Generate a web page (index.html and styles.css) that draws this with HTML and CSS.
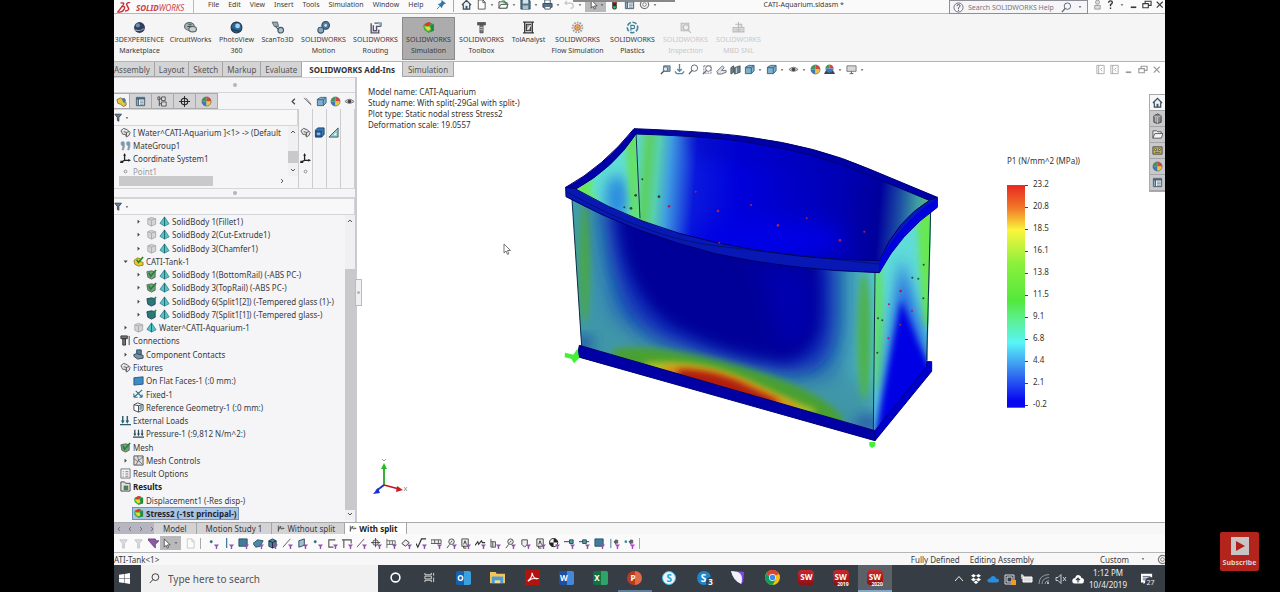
FILE: index.html
```html
<!DOCTYPE html>
<html lang="en">
<head>
<meta charset="utf-8">
<title>CATI-Aquarium.sldasm</title>
<link rel="stylesheet" href="styles.css">
</head>
<body>
<svg class="sprite" aria-hidden="true">
  <symbol id="sphere" viewBox="0 0 12 12"><circle cx="6" cy="6" r="5" fill="#2c3e5c"/><circle cx="4.5" cy="4" r="2" fill="#6f8cae"/><path d="M2 8q4 2 8-1" stroke="#9ab" fill="none"/></symbol>
  <symbol id="circuit" viewBox="0 0 12 12"><ellipse cx="5" cy="5" rx="4.5" ry="3.5" fill="#a9b1b5" stroke="#566"/><ellipse cx="8" cy="7.500" rx="3.500" ry="2.500" fill="#c9d0d2" stroke="#566"/><path d="M3 5h4M4 3.500h3" stroke="#455"/></symbol>
  <symbol id="photo" viewBox="0 0 12 12"><circle cx="6" cy="6" r="5" fill="#27689b" stroke="#234"/><circle cx="7" cy="4.500" r="2.200" fill="#a7d4ef"/><path d="M2 7q3 3 7 2" stroke="#134" fill="none"/></symbol>
  <symbol id="scan" viewBox="0 0 12 12"><path d="M1 1h5l1 4H3z" fill="#9aa7b0" stroke="#455" stroke-width=".7"/><circle cx="9" cy="8.500" r="2.600" fill="#a7c4d4" stroke="#456"/><path d="M4 5l3 3" stroke="#456"/></symbol>
  <symbol id="motion" viewBox="0 0 12 12"><circle cx="8" cy="4" r="3.500" fill="#4f7fa6" stroke="#345"/><circle cx="8" cy="4" r="1.200" fill="#dde"/><circle cx="3.500" cy="8.500" r="2.700" fill="#86a9c4" stroke="#456"/></symbol>
  <symbol id="route" viewBox="0 0 12 12"><path d="M2 2v9h7V8M4 4v5h3V5h4M5 2h6v3" fill="none" stroke="#556" stroke-width="1.300"/><path d="M7 1h4v4" fill="#9ab"/></symbol>
  <symbol id="sim" viewBox="0 0 12 12"><path d="M1 4l5-3 5 2v6l-5 2-4-3z" fill="#2fae4a"/><path d="M2 3l4-2 3 1-4 3z" fill="#e3342b"/><path d="M2 5l5 0 2 3-4 1z" fill="#f7d32c"/><path d="M8 4l3-1v6l-3 1z" fill="#1d8b4a"/></symbol>
  <symbol id="bolt" viewBox="0 0 12 12"><path d="M2 1h8v3H2z" fill="#555"/><path d="M4.500 4h3v7h-3z" fill="#777" stroke="#444" stroke-width=".6"/><path d="M4.500 6h3M4.500 8h3" stroke="#ddd" stroke-width=".6"/></symbol>
  <symbol id="tol" viewBox="0 0 12 12"><path d="M1 1h10M1 11h10M2.500 1v10M9.500 1v10" stroke="#333" stroke-width="1.200"/><path d="M4 3h4v6H4z" fill="#8fa5b5" stroke="#333"/><path d="M5 8l3-4" stroke="#fff"/></symbol>
  <symbol id="flow" viewBox="0 0 12 12"><circle cx="6" cy="6" r="4.500" fill="none" stroke="#8aa" stroke-width="1.800" stroke-dasharray="1.500 1"/><circle cx="6" cy="6" r="2.500" fill="#f3c46a" stroke="#e8604a"/><circle cx="6" cy="6" r="1" fill="#3a9"/></symbol>
  <symbol id="plast" viewBox="0 0 12 12"><circle cx="6" cy="6" r="4.800" fill="none" stroke="#47839b" stroke-width="1.500" stroke-dasharray="4 1.500"/><path d="M4.500 9V4h2q1.500 0 1.500 1.500T6.500 7h-2" fill="none" stroke="#3a7d92"/></symbol>
  <symbol id="insp" viewBox="0 0 12 12"><path d="M2 2h7v7H2z" fill="#ddd" stroke="#bbb"/><circle cx="6.500" cy="6" r="2.500" fill="#eee" stroke="#bbb"/><path d="M8 8l3 3" stroke="#bbb"/></symbol>
  <symbol id="mbd" viewBox="0 0 12 12"><path d="M1 6h10v4H1zM3 3h6v3M6 1v9M3 8h6" fill="#ddd" stroke="#bbb"/></symbol>
  <symbol id="home" viewBox="0 0 12 12"><path d="M1 6.500L6 1.500l5 5M2.500 6v5h7V6" fill="#e6eef4" stroke="#3b4a56" stroke-width="1.300"/><path d="M5 11V7.500h2V11" fill="#3b5468"/></symbol>
  <symbol id="page" viewBox="0 0 12 12"><path d="M2.500 1h5l2.500 2.500V11H2.500z" fill="#fff" stroke="#555"/><path d="M7.500 1v3H10" fill="none" stroke="#555"/></symbol>
  <symbol id="open" viewBox="0 0 12 12"><path d="M1 10V3h4l1 1h4v6z" fill="#e9eef0" stroke="#555"/><path d="M1 10l2-4h8l-2 4z" fill="#fff" stroke="#555"/><path d="M4 2q4-2 5 3l1.500-1L9 7 6.500 5.500 8 5Q7 2 4 3z" fill="#2d9a47"/></symbol>
  <symbol id="save" viewBox="0 0 12 12"><path d="M1 1h9l1 1v9H1z" fill="#4f768c" stroke="#2d4657"/><path d="M3 1h6v4H3z" fill="#d7e3e9"/><path d="M3 7h6v4H3z" fill="#aebfc8"/></symbol>
  <symbol id="print" viewBox="0 0 12 12"><path d="M3 1h6v4H3z" fill="#fff" stroke="#456"/><path d="M1 5h10v4H1z" fill="#557a90" stroke="#345"/><path d="M3 8h6v3H3z" fill="#fff" stroke="#456"/></symbol>
  <symbol id="undo" viewBox="0 0 12 12"><path d="M3 2L1 4.500 3.500 6M1 4.500h6q3 0 3 3T7 10" fill="none" stroke="#c3c5ca" stroke-width="1.400"/></symbol>
  <symbol id="arrow" viewBox="0 0 12 12"><path d="M3.500 1v9l2-2 1.500 3 1.300-.7L7 7.500h3z" fill="#fff" stroke="#444" stroke-width=".9"/></symbol>
  <symbol id="light" viewBox="0 0 12 12"><rect x="3.500" y=".5" width="5" height="11" rx="2" fill="#333"/><circle cx="6" cy="3" r="1.500" fill="#e33"/><circle cx="6" cy="9" r="1.500" fill="#3b4"/></symbol>
  <symbol id="list" viewBox="0 0 12 12"><path d="M1.500 1.500h9v9h-9z" fill="#e8eef2" stroke="#456"/><path d="M1.500 3h9" stroke="#345f7c" stroke-width="1.500"/><path d="M3.500 3v7" stroke="#345f7c" stroke-width="1.500"/><path d="M5.500 5.500h4M5.500 7.300h4M5.500 9h4" stroke="#678" stroke-width=".8"/></symbol>
  <symbol id="gear" viewBox="0 0 12 12"><circle cx="6" cy="6" r="4.500" fill="none" stroke="#777" stroke-width="1.300"/><circle cx="6" cy="6" r="2" fill="none" stroke="#777"/></symbol>
  <symbol id="caret" viewBox="0 0 12 12"><path d="M4 5h4L6 7.500z" fill="#555"/></symbol>
  <symbol id="pin" viewBox="0 0 12 12"><path d="M6 1l5 4-2 .5L7 8l-.5 2L2 5.500 4.500 5 6 3z" fill="#2c77ad"/><path d="M4 8l-3 3" stroke="#2c77ad"/></symbol>
  <symbol id="mag" viewBox="0 0 12 12"><circle cx="7" cy="4.500" r="3.500" fill="none" stroke="#54616f"/><path d="M4.500 7L1 11" stroke="#54616f" stroke-width="1.400"/></symbol>
  <symbol id="help" viewBox="0 0 12 12"><circle cx="6" cy="6" r="5" fill="#f4f5f7" stroke="#667"/><path d="M4.300 4.500q0-1.800 1.700-1.800t1.700 1.500Q7.700 5.500 6 6.200V7.500M6 8.500v1.200" fill="none" stroke="#445"/></symbol>
  <symbol id="user" viewBox="0 0 12 12"><circle cx="6" cy="3.500" r="2.200" fill="#ddd" stroke="#999"/><path d="M3 11V7h6v4z" fill="#ddd" stroke="#999"/></symbol>
  <symbol id="quest" viewBox="0 0 12 12"><path d="M4 4q0-2 2-2t2 1.800Q8 5 6 6.200V8M6 9.200V11" fill="none" stroke="#333" stroke-width="1.500"/></symbol>
  <symbol id="min" viewBox="0 0 12 12"><path d="M3 9h6" stroke="currentColor" stroke-width="1.800"/></symbol>
  <symbol id="rest" viewBox="0 0 12 12"><path d="M2 5h6v4.500H2zM4.500 5V2.500H11V7H8" fill="none" stroke="currentColor" stroke-width="1.200"/></symbol>
  <symbol id="close" viewBox="0 0 12 12"><path d="M3 3l6.500 6.500M9.500 3L3 9.500" stroke="currentColor" stroke-width="1.200"/></symbol>
  <symbol id="zfit" viewBox="0 0 12 12"><path d="M4 2h7v6H4z" fill="#8fb0c4" stroke="#567"/><circle cx="6" cy="5.500" r="2.500" fill="#dfe9ef" stroke="#567"/><path d="M4 8l-3 3" stroke="#456" stroke-width="1.500"/></symbol>
  <symbol id="norm" viewBox="0 0 12 12"><path d="M6 0v8M3.500 5.500L6 8l2.500-2.500M1 8l2 2.500h6L11 8" fill="none" stroke="#5f87a3" stroke-width="1.500"/></symbol>
  <symbol id="zarea" viewBox="0 0 12 12"><path d="M2 2h8v8H2z" fill="none" stroke="#778" stroke-dasharray="2 1"/><circle cx="7" cy="5" r="3" fill="#fff" stroke="#667"/><path d="M5 7l-4 4" stroke="#667" stroke-width="1.400"/></symbol>
  <symbol id="prev" viewBox="0 0 12 12"><path d="M1 8l6-6 2 2-3 3h5v2l-5 2H2z" fill="#dfe6ea" stroke="#667"/></symbol>
  <symbol id="sect" viewBox="0 0 12 12"><path d="M1 4l3-2v7l-3 2zM5 4l6-2v7l-6 2z" fill="#6b8092" stroke="#455"/><path d="M7 4v6" stroke="#cde"/></symbol>
  <symbol id="cube" viewBox="0 0 12 12"><path d="M1.500 3.500L5 1.500h6v6l-3 3H1.500z" fill="#7fb0cd" stroke="#3d6178"/><path d="M1.500 4H8v6.500M8 4l3-2.500" fill="none" stroke="#3d6178"/></symbol>
  <symbol id="dcube" viewBox="0 0 12 12"><path d="M1.500 3.500L4 1h7v7l-2.500 3h-7z" fill="#3379b4" stroke="#1d3f66"/><path d="M1.500 4H8.500v7H1.500z" fill="#1f4c85"/><path d="M3 6h4v3H3z" fill="#8ab4dc"/></symbol>
  <symbol id="eye" viewBox="0 0 12 12"><path d="M1 6q5-5 10 0-5 4-10 0z" fill="#ccc" stroke="#777"/><circle cx="6" cy="6" r="2" fill="#444"/></symbol>
  <symbol id="ball" viewBox="0 0 12 12"><path d="M6 6V1a5 5 0 0 0-5 5z" fill="#3b9b55"/><path d="M6 6V1a5 5 0 0 1 5 5z" fill="#d9453c"/><path d="M6 6v5a5 5 0 0 1-5-5z" fill="#3c78c0"/><path d="M6 6v5a5 5 0 0 0 5-5z" fill="#e8c840"/><circle cx="6" cy="6" r="5" fill="none" stroke="#555" stroke-width=".6"/></symbol>
  <symbol id="scene" viewBox="0 0 12 12"><path d="M0 11l2-4h8l2 4z" fill="#444"/><path d="M6 5V.5a4.500 4.500 0 0 0-4.500 4.500z" fill="#3b9b55"/><path d="M6 5V.5a4.500 4.500 0 0 1 4.500 4.500z" fill="#d9453c"/><path d="M1.500 5h9Q10 9 6 9.500 2 9 1.500 5z" fill="#3c78c0"/></symbol>
  <symbol id="mon" viewBox="0 0 12 12"><path d="M1 2h10v6H1z" fill="#d6d9db" stroke="#777"/><path d="M6 8v2M4 10.500h4" stroke="#555"/></symbol>
  <symbol id="panel" viewBox="0 0 12 12"><path d="M2 1.500h8v9H2zM4 1.500v9M8 4L6 6l2 2" fill="none" stroke="#aaa"/></symbol>
  <symbol id="asm" viewBox="0 0 12 12"><path d="M1 4l4-2 3 2v2l3 1v3l-3 1.500L5 9 2 8z" fill="#e8c63c" stroke="#6b5c20" stroke-width=".8"/><path d="M6 3l3-1 2 3-2 3z" fill="#4d7a9c"/></symbol>
  <symbol id="conf" viewBox="0 0 12 12"><path d="M2.500 1v10M2.500 3h3M2.500 8.500h3" fill="none" stroke="#444"/><path d="M5 1h4v4H5zM5 6.500h5V11H5zM1 1h2v3H1z" fill="#ddd" stroke="#444" stroke-width=".9"/></symbol>
  <symbol id="target" viewBox="0 0 12 12"><circle cx="6" cy="6" r="3.500" fill="none" stroke="#222" stroke-width="1.200"/><path d="M6 0v12M0 6h12" stroke="#222"/></symbol>
  <symbol id="hide" viewBox="0 0 12 12"><path d="M2 2l8 8M4 2l6 7" stroke="#777"/></symbol>
  <symbol id="funnel" viewBox="0 0 12 12"><path d="M1 1.500h9L6.500 6v5L4.500 10V6z" fill="#5d7f95" stroke="#334"/></symbol>
  <symbol id="part" viewBox="0 0 12 12"><path d="M1 4l3-2.500L8 3l3 3-1 3-3 2-1-3-3 0z" fill="#e7e7e7" stroke="#555"/><path d="M4 5l3 1 3-1M7 6v4" fill="none" stroke="#555"/></symbol>
  <symbol id="mate" viewBox="0 0 12 12"><path d="M1 2.500q2-2 4 0V7L4 11H2L3 7 1 5zM7 2.500q2-2 4 0V7l-1 4H8l1-4-2-2z" fill="#7f99ab" stroke="#9ab" stroke-width=".5"/></symbol>
  <symbol id="coord" viewBox="0 0 12 12"><path d="M5 2v6h5M5 8l-4 2" fill="none" stroke="#222" stroke-width="1.400"/><path d="M3.500 3L5 0l1.500 3zM9 6.500l3 1.500-3 1.500zM1 8l3 3H0z" fill="#222"/></symbol>
  <symbol id="dot" viewBox="0 0 12 12"><circle cx="6" cy="6" r="1.500" fill="none" stroke="#888"/></symbol>
  <symbol id="tri" viewBox="0 0 12 12"><path d="M11 1v10H1z" fill="#8ccfc9" stroke="#456"/><path d="M9 6v3H6z" fill="#fff"/></symbol>
  <symbol id="mesh" viewBox="0 0 12 12"><path d="M6 1L1 8l5 3 5-2.500z" fill="#55c3c6" stroke="#267e86" stroke-width=".8"/><path d="M6 1v10" stroke="#1b6870"/></symbol>
  <symbol id="gcube" viewBox="0 0 12 12"><path d="M2 3l4-1.500L10.500 3v6L6 11 2 9z" fill="#d4d4d4" stroke="#aaa"/><path d="M2 3l4 1.500L10.500 3M6 4.500V11" fill="none" stroke="#aaa"/></symbol>
  <symbol id="okg" viewBox="0 0 12 12"><path d="M1 3l5-1 4 1v6l-4 2-4-2z" fill="#7f9c86" stroke="#576b5c"/><path d="M3 4l2 4 6-7" fill="none" stroke="#178a2c" stroke-width="1.800"/></symbol>
  <symbol id="okb" viewBox="0 0 12 12"><path d="M1 3l5-1 4 1v6l-4 2-4-2z" fill="#336f96" stroke="#245"/><path d="M3 4l2 4 6-7" fill="none" stroke="#178a4c" stroke-width="1.800"/></symbol>
  <symbol id="oky" viewBox="0 0 12 12"><path d="M1 5l4-3 3 1v3l3 1v3l-5 1-4-2z" fill="#e5c93a" stroke="#997f1c"/><path d="M4 4l2 3 5-6" fill="none" stroke="#178a2c" stroke-width="1.700"/></symbol>
  <symbol id="conn" viewBox="0 0 12 12"><path d="M1 1h7v3H1zM3 4h3v7H3zM10 1v10" fill="#777" stroke="#333"/></symbol>
  <symbol id="contact" viewBox="0 0 12 12"><path d="M4 1h5v5H4z" fill="#4f86a8" stroke="#345"/><path d="M1 6l3-1 7 2v3l-6 1-4-3z" fill="#7893a3" stroke="#345"/></symbol>
  <symbol id="face" viewBox="0 0 12 12"><path d="M1 3l10-1v8L1 11z" fill="#3c8bc4" stroke="#255a85"/></symbol>
  <symbol id="fixed" viewBox="0 0 12 12"><path d="M1 9L10 1M1 9V5M1 9h4M3 2l7 7M10 9V6M10 9H7" fill="none" stroke="#2f7189" stroke-width="1.200"/></symbol>
  <symbol id="refg" viewBox="0 0 12 12"><path d="M1 3l4-2 6 2v6l-5 2-5-2zM6 4v7M1 3l5 1 5-1" fill="#fff" stroke="#444"/><path d="M7 5l3-1v4l-3 1z" fill="#6ab"/></symbol>
  <symbol id="load" viewBox="0 0 12 12"><path d="M3 1v7M8 1v7M0 10.500h12" stroke="#2e6074" stroke-width="1.600"/><path d="M1 6h4L3 9.500zM6 6h4L8 9.500z" fill="#2e6074"/></symbol>
  <symbol id="press" viewBox="0 0 12 12"><path d="M2 2v6M6 2v6M10 2v6M0 10h12" stroke="#2f4b5c" stroke-width="1.400"/><path d="M.5 6h3L2 9zM4.500 6h3L6 9zM8.500 6h3L10 9z" fill="#2f4b5c"/></symbol>
  <symbol id="meshc" viewBox="0 0 12 12"><path d="M1 1h10v10H1z" fill="#ddd" stroke="#555"/><path d="M1 4l4 3 6-5M3 11l3-5 4 4M5 1l1 5" fill="none" stroke="#555" stroke-width=".8"/></symbol>
  <symbol id="ropt" viewBox="0 0 12 12"><path d="M1 1h10v10H1z" fill="#f1f1f1" stroke="#777"/><path d="M3 4h1M6 4h3M3 6.500h1M6 6.500h3M3 9h1M6 9h3" stroke="#777"/></symbol>
  <symbol id="rfold" viewBox="0 0 12 12"><path d="M1 1h4l1 1.500h5V11H1z" fill="#e3e3dc" stroke="#444"/><path d="M4 5h5v5H4z" fill="#4d7a66"/></symbol>
  <symbol id="exp" viewBox="0 0 12 12"><path d="M5 4v4.500L7.500 6z" fill="#444"/></symbol>
  <symbol id="exd" viewBox="0 0 12 12"><path d="M4 5h4.500L6 7.500z" fill="#444"/></symbol>
  <symbol id="up" viewBox="0 0 12 12"><path d="M3 7.500l3-3 3 3" fill="none" stroke="#555" stroke-width="1.500"/></symbol>
  <symbol id="down" viewBox="0 0 12 12"><path d="M3 4.500l3 3 3-3" fill="none" stroke="#555" stroke-width="1.500"/></symbol>
  <symbol id="left" viewBox="0 0 12 12"><path d="M7.500 3L4.500 6l3 3" fill="none" stroke="#444" stroke-width="1.300"/></symbol>
  <symbol id="right" viewBox="0 0 12 12"><path d="M4.500 3l3 3-3 3" fill="none" stroke="#444" stroke-width="1.300"/></symbol>
  <symbol id="box3" viewBox="0 0 12 12"><path d="M2 3l4-2 4 2v7l-4 1.500L2 10z" fill="#888" stroke="#444"/><path d="M6 4.500v7M2 3l4 1.500L10 3M4 4v6" fill="none" stroke="#ddd" stroke-width=".7"/></symbol>
  <symbol id="fold" viewBox="0 0 12 12"><path d="M1 10V2h4l1 1h4v2M1 10l2-5h9l-2 5z" fill="#f5f5f5" stroke="#555"/></symbol>
  <symbol id="view" viewBox="0 0 12 12"><path d="M1 2h10v8H1z" fill="#cdb83e" stroke="#444"/><path d="M3 4h2v2H3zM7 4h2v2H7zM3 8h6" fill="#fff" stroke="#444" stroke-width=".8"/></symbol>
  <!-- selection filter glyphs: the small funnel is shared -->
  <symbol id="ff" viewBox="0 0 12 12"><path d="M6.500 7H12L10 9.500V12H8.500V9.500z" fill="#8b57a5"/></symbol>
  <symbol id="f1" viewBox="0 0 12 12"><circle cx="3.500" cy="4" r="1.600" fill="#3d6e7c"/><use href="#ff"/></symbol>
  <symbol id="f2" viewBox="0 0 12 12"><path d="M4 0v11" stroke="#3d6e8c" stroke-width="1.300"/><use href="#ff"/></symbol>
  <symbol id="f3" viewBox="0 0 12 12"><path d="M1 1h9v8H1z" fill="#3f7d9b" stroke="#2b5468"/><use href="#ff"/></symbol>
  <symbol id="f4" viewBox="0 0 12 12"><path d="M0 6l5-4 6 1-3 6-5 1z" fill="#4b8aa5" stroke="#2b5468"/><use href="#ff"/></symbol>
  <symbol id="f5" viewBox="0 0 12 12"><path d="M2 3l4-2 4 2v6l-4 2-4-2z" fill="#4b7ea0" stroke="#244"/><path d="M6 5v6M2 3l4 2 4-2" fill="none" stroke="#223"/><use href="#ff"/></symbol>
  <symbol id="f6" viewBox="0 0 12 12"><path d="M1 10L9 1" stroke="#555"/><use href="#ff"/></symbol>
  <symbol id="f7" viewBox="0 0 12 12"><path d="M2 3l6-2v7L2 10z" fill="#9cc0cc" stroke="#346"/><use href="#ff"/></symbol>
  <symbol id="f8" viewBox="0 0 12 12"><path d="M9 2H2v8h5" fill="none" stroke="#555" stroke-width="1.200"/><use href="#ff"/></symbol>
  <symbol id="f9" viewBox="0 0 12 12"><path d="M2 11V2h8v4M0 2h4" fill="none" stroke="#555" stroke-width="1.200"/><use href="#ff"/></symbol>
  <symbol id="f10" viewBox="0 0 12 12"><circle cx="5" cy="5" r="3" fill="none" stroke="#444"/><path d="M5 0v10M0 5h10" stroke="#444"/><use href="#ff"/></symbol>
  <symbol id="f11" viewBox="0 0 12 12"><path d="M1 1v10M1 3h9v4H1" fill="none" stroke="#666"/><path d="M4 3v4M7 3v4" stroke="#666"/><use href="#ff"/></symbol>
  <symbol id="f12" viewBox="0 0 12 12"><path d="M1 6l4-4 4 3-4 4z" fill="#eee" stroke="#333"/><use href="#ff"/></symbol>
  <symbol id="f13" viewBox="0 0 12 12"><path d="M0 6l2 4 4-9h5" fill="none" stroke="#333" stroke-width="1.300"/><use href="#ff"/></symbol>
  <symbol id="f14" viewBox="0 0 12 12"><path d="M0 2h11v4H0zM4 2v4M8 2v4" fill="#eee" stroke="#555"/><use href="#ff"/></symbol>
  <symbol id="f15" viewBox="0 0 12 12"><circle cx="6" cy="4" r="3" fill="#eee" stroke="#444"/><path d="M4 7l-3 4M5 5l2-2" stroke="#444"/><use href="#ff"/></symbol>
  <symbol id="f16" viewBox="0 0 12 12"><path d="M2 1h7v8H2z" fill="#eee" stroke="#444"/><path d="M4 7l1.500-4L7 7M4 9v2h3" fill="none" stroke="#333"/><use href="#ff"/></symbol>
  <symbol id="f17" viewBox="0 0 12 12"><path d="M0 8l3-4 1 3 3-4 1 2h3" fill="none" stroke="#333" stroke-width="1.200"/><use href="#ff"/></symbol>
  <symbol id="f18" viewBox="0 0 12 12"><path d="M1 1v9h5V4H1M3 4v6" fill="#ddd" stroke="#555"/><use href="#ff"/></symbol>
  <symbol id="f19" viewBox="0 0 12 12"><path d="M2 2h6v5L5 10 2 7z" fill="#eee" stroke="#444"/><use href="#ff"/></symbol>
  <symbol id="f20" viewBox="0 0 12 12"><circle cx="5" cy="5" r="4.500" fill="#fff" stroke="#222"/><path d="M5 5V.5A4.500 4.500 0 0 1 9.500 5zM5 5v4.500A4.500 4.500 0 0 1 .5 5z" fill="#222"/><use href="#ff"/></symbol>
  <symbol id="f21" viewBox="0 0 12 12"><path d="M0 4h6" stroke="#333"/><path d="M6 2h4v4H6z" fill="#4aa0a8" stroke="#345"/><use href="#ff"/></symbol>
  <symbol id="f22" viewBox="0 0 12 12"><path d="M0 4h11" stroke="#333"/><path d="M4 2h4v4H4z" fill="#4aa0a8" stroke="#345"/><use href="#ff"/></symbol>
  <symbol id="f23" viewBox="0 0 12 12"><path d="M2 1v10" stroke="#3d6e8c"/><path d="M5 4l3-3v7z" fill="#555"/><path d="M7 2h3v4H7z" fill="#666"/><path d="M6.500 7H12L10 9.500V12H8.500V9.500z" fill="#b13fd0"/></symbol>
  <symbol id="f24" viewBox="0 0 12 12"><circle cx="2" cy="4" r="1.500" fill="#3d8e9c"/><path d="M5 4l3-3v7z" fill="#555"/><path d="M7 2h3v4H7z" fill="#666"/><path d="M6.500 7H12L10 9.500V12H8.500V9.500z" fill="#b13fd0"/></symbol>
  <symbol id="gf" viewBox="0 0 12 12"><path d="M2 2h8L7 6v5H5V6z" fill="#ddd" stroke="#c5c5cb"/></symbol>
  <symbol id="pf" viewBox="0 0 12 12"><path d="M0 1h8l1 2h3L8 7v4L6 9 0 2z" fill="#8d5aa3" stroke="#5c3b70" stroke-width=".8"/></symbol>
  <symbol id="plot" viewBox="0 0 12 12"><path d="M2 1v9M2 8l3-6 1 4 5-1" fill="none" stroke="#333" stroke-width="1.200"/><path d="M6 2l4 2" stroke="#5a5"/></symbol>
  <!-- Task bar -->
  <symbol id="win" viewBox="0 0 12 12"><path d="M0 1.800L5.400 1v4.700H0zM6 1l6-1v5.700H6zM0 6.300h5.400V11L0 10.200zM6 6.300h6V12l-6-1z" fill="#fff"/></symbol>
  <symbol id="tmag" viewBox="0 0 12 12"><circle cx="7" cy="4.500" r="3.700" fill="none" stroke="#333"/><path d="M4.300 7.200L.8 11" stroke="#333"/></symbol>
  <symbol id="ring" viewBox="0 0 12 12"><circle cx="6" cy="6" r="4.800" fill="none" stroke="#fff" stroke-width="1.700"/></symbol>
  <symbol id="tv" viewBox="0 0 12 12"><path d="M1 1v2h7V1M1 11V9h7v2M1 4.500h7v3H1zM10.500 1v3M10.500 6v5" fill="none" stroke="#ddd"/></symbol>
  <symbol id="folder" viewBox="0 0 16 16"><path d="M0 2h6l1 2h9v10H0z" fill="#f2c45c"/><path d="M2 7h12v7H2z" fill="#4b9cd8"/><path d="M5 14v-3h6v3z" fill="#f7d98a"/></symbol>
  <symbol id="acro" viewBox="0 0 16 16"><path d="M0 0h16v16H0z" fill="#b3130f"/><path d="M3 12Q8 8 7.500 3q2 8 6 6-6-1-10.500 3z" fill="none" stroke="#fff" stroke-width="1.200"/></symbol>
  <symbol id="chrome" viewBox="0 0 16 16"><circle cx="8" cy="8" r="8" fill="#f4c20d"/><path d="M8 8L1.100 4A8 8 0 0 1 15 4z" fill="#db4437"/><path d="M8 8L1.100 4A8 8 0 0 0 8 16l3.500-6z" fill="#0f9d58"/><circle cx="8" cy="8" r="3.700" fill="#fff"/><circle cx="8" cy="8" r="3" fill="#4285f4"/></symbol>
  <symbol id="purple" viewBox="0 0 16 16"><path d="M6 1l9 1-1 11-3 2z" fill="#7c4be8"/><path d="M1 1q7 0 10 3 3 4 1 11Q3 11 1 1z" fill="#f3f0ff"/></symbol>
  <symbol id="tup" viewBox="0 0 12 12"><path d="M2 8l4-4.500L10 8" fill="none" stroke="#eee"/></symbol>
  <symbol id="drop" viewBox="0 0 12 12"><path d="M3.500 1L6 2.800 3.500 4.600 1 2.800zM8.500 1L11 2.800 8.500 4.600 6 2.800zM3.500 4.800L6 6.600 3.500 8.400 1 6.600zM8.500 4.800L11 6.600 8.500 8.400 6 6.600zM6 7.500l2.300 1.700L6 11 3.700 9.200z" fill="#fff"/></symbol>
  <symbol id="cloud" viewBox="0 0 12 12"><path d="M2.500 9.500Q0 9 .5 7T3 5.500Q4 2.500 6.500 3T9 5.500q3 0 3 2t-2 2z" fill="currentColor"/></symbol>
  <symbol id="ucloud" viewBox="0 0 12 12"><path d="M2.500 10.500Q0 10 .2 7.500T3 5Q4 1.500 6.500 2T9.500 5Q12 5 12 7.500t-2 3z" fill="#fff"/><path d="M6 9.500V5.500M4 7.200l2-2 2 2" fill="none" stroke="#373d45" stroke-width="1.200"/></symbol>
  <symbol id="outl" viewBox="0 0 12 12"><path d="M1 2h9v9H1zM3 4h5v5H3z" fill="none" stroke="#ddd"/><path d="M7 7h5v5H7z" fill="#f39a2b"/></symbol>
  <symbol id="batt" viewBox="0 0 12 12"><path d="M2 4h9v5H2z" fill="#ddd" stroke="#fff"/><path d="M0 3h3M1 1v5" stroke="#fff"/></symbol>
  <symbol id="wifi" viewBox="0 0 12 12"><path d="M1 11Q1 2 11 1.500M4 11q0-6 7-6.500M7 11q0-3 4-3.500" fill="none" stroke="#999"/><circle cx="10" cy="10" r="1" fill="#ddd"/></symbol>
  <symbol id="vol" viewBox="0 0 12 12"><path d="M1 4.500h2l3-3v9l-3-3H1zM8 4l3 4M11 4L8 8" fill="none" stroke="#ccc"/></symbol>
  <symbol id="note" viewBox="0 0 14 14"><path d="M0 1h13v10H5l-2 2v-2H0z" fill="#fff"/><path d="M2 4h9M2 6h9M2 8h5" stroke="#445" stroke-width=".9"/></symbol>
  <symbol id="swi" viewBox="0 0 16 16"><path d="M1 3l3-2h11v11l-2 3H1z" fill="#8f1216"/><path d="M1 3l12 0v12H1z" fill="#c2262b"/></symbol>
</svg>

<div class="screen">
<main class="app">
  <header class="titlebar">
    <div class="logo">
      <svg class="ds" viewBox="0 0 18 12"><path d="M4 1q5-1 3 2L1 11q5 1 7-3t-3-3M15 0q-5 1-4 3t2 4-4 3" fill="none" stroke="#c8303a" stroke-width="1.600"/></svg>
      <span><b>SOLID</b>WORKS</span>
    </div>
    <nav class="menus"><a href="#">File</a><a href="#">Edit</a><a href="#">View</a><a href="#">Insert</a><a href="#">Tools</a><a href="#">Simulation</a><a href="#">Window</a><a href="#">Help</a></nav>
    <svg class="i pinned"><use href="#pin"/></svg>
    <div class="quick">
      <svg class="i"><use href="#home"/></svg><svg class="i"><use href="#page"/></svg><svg class="i s"><use href="#caret"/></svg><svg class="i"><use href="#open"/></svg><svg class="i s"><use href="#caret"/></svg><svg class="i"><use href="#save"/></svg><svg class="i s"><use href="#caret"/></svg><svg class="i"><use href="#print"/></svg><svg class="i s"><use href="#caret"/></svg><svg class="i"><use href="#undo"/></svg><svg class="i s"><use href="#caret"/></svg>
      <button class="picked" aria-label="Select"><svg class="i"><use href="#arrow"/></svg><svg class="i s"><use href="#caret"/></svg></button>
      <svg class="i"><use href="#light"/></svg><svg class="i"><use href="#list"/></svg><svg class="i"><use href="#gear"/></svg><svg class="i s"><use href="#caret"/></svg>
    </div>
    <span class="doc">CATI-Aquarium.sldasm *</span>
    <label class="find"><svg class="i"><use href="#help"/></svg><input type="text" placeholder="Search SOLIDWORKS Help" aria-label="Search SOLIDWORKS Help"><svg class="i"><use href="#mag"/></svg><svg class="i s"><use href="#caret"/></svg></label>
    <div class="wctl"><svg class="i"><use href="#user"/></svg><svg class="i"><use href="#quest"/></svg><svg class="i s"><use href="#caret"/></svg><svg class="i"><use href="#min"/></svg><svg class="i"><use href="#rest"/></svg><svg class="i"><use href="#close"/></svg></div>
  </header>

  <section class="ribbon">
    <button class="w52"><svg class="i"><use href="#sphere"/></svg>3DEXPERIENCE<br>Marketplace</button>
    <button class="w52"><svg class="i"><use href="#circuit"/></svg>CircuitWorks</button>
    <button class="w40"><svg class="i"><use href="#photo"/></svg>PhotoView<br>360</button>
    <button class="w40"><svg class="i"><use href="#scan"/></svg>ScanTo3D</button>
    <button class="w52"><svg class="i"><use href="#motion"/></svg>SOLIDWORKS<br>Motion</button>
    <button class="w53"><svg class="i"><use href="#route"/></svg>SOLIDWORKS<br>Routing</button>
    <button class="w53 on"><svg class="i"><use href="#sim"/></svg>SOLIDWORKS<br>Simulation</button>
    <button class="w53"><svg class="i"><use href="#bolt"/></svg>SOLIDWORKS<br>Toolbox</button>
    <button class="w40"><svg class="i"><use href="#tol"/></svg>TolAnalyst</button>
    <button class="w58"><svg class="i"><use href="#flow"/></svg>SOLIDWORKS<br>Flow Simulation</button>
    <button class="w53"><svg class="i"><use href="#plast"/></svg>SOLIDWORKS<br>Plastics</button>
    <button class="w53 off"><svg class="i"><use href="#insp"/></svg>SOLIDWORKS<br>Inspection</button>
    <button class="w53 off"><svg class="i"><use href="#mbd"/></svg>SOLIDWORKS<br>MBD SNL</button>
  </section>

  <div class="tabrow">
    <nav class="tabs"><button>Assembly</button><button>Layout</button><button>Sketch</button><button>Markup</button><button>Evaluate</button><button class="cur">SOLIDWORKS Add-Ins</button><button>Simulation</button></nav>
    <div class="hud">
      <svg class="i"><use href="#zfit"/></svg><svg class="i"><use href="#norm"/></svg><svg class="i"><use href="#mag"/></svg><svg class="i"><use href="#zarea"/></svg><svg class="i"><use href="#prev"/></svg><svg class="i"><use href="#sect"/></svg><svg class="i"><use href="#cube"/></svg><svg class="i s"><use href="#caret"/></svg><svg class="i"><use href="#cube"/></svg><svg class="i s"><use href="#caret"/></svg><svg class="i"><use href="#eye"/></svg><svg class="i s"><use href="#caret"/></svg><svg class="i"><use href="#ball"/></svg><svg class="i"><use href="#scene"/></svg><svg class="i s"><use href="#caret"/></svg><svg class="i"><use href="#mon"/></svg><svg class="i s"><use href="#caret"/></svg>
    </div>
    <div class="dctl"><svg class="i"><use href="#panel"/></svg><svg class="i"><use href="#panel"/></svg><svg class="i"><use href="#min"/></svg><svg class="i"><use href="#rest"/></svg><svg class="i"><use href="#close"/></svg></div>
  </div>

  <div class="work">
    <aside class="side">
      <div class="grip"></div>
      <div class="ptabs">
        <button class="first" aria-label="Tree"><svg class="i"><use href="#asm"/></svg></button><button aria-label="Properties"><svg class="i"><use href="#list"/></svg></button><button aria-label="Configurations"><svg class="i"><use href="#conf"/></svg></button><button aria-label="Dimensions"><svg class="i"><use href="#target"/></svg></button><button aria-label="Display"><svg class="i"><use href="#ball"/></svg></button>
        <span class="pico"><svg class="i"><use href="#left"/></svg><svg class="i"><use href="#hide"/></svg><svg class="i"><use href="#cube"/></svg><svg class="i"><use href="#ball"/></svg><svg class="i"><use href="#eye"/></svg></span>
      </div>
      <div class="upper">
        <div class="umain">
          <div class="filter"><svg class="i"><use href="#funnel"/></svg><svg class="i s"><use href="#caret"/></svg></div>
          <div class="ubody">
            <ul class="tree">
              <li><svg class="i"><use href="#part"/></svg>[ Water^CATI-Aquarium ]&lt;1&gt; -&gt; (Default</li>
              <li><svg class="i"><use href="#mate"/></svg>MateGroup1</li>
              <li><svg class="i"><use href="#coord"/></svg>Coordinate System1</li>
              <li class="dim"><svg class="i"><use href="#dot"/></svg>Point1</li>
            </ul>
            <div class="vs"><svg class="i s"><use href="#up"/></svg><i class="short"></i><svg class="i s"><use href="#down"/></svg></div>
          </div>
          <div class="hs"><i></i><svg class="i s"><use href="#right"/></svg></div>
        </div>
        <div class="dcol"><svg class="i"><use href="#part"/></svg><i></i><svg class="i"><use href="#coord"/></svg><svg class="i"><use href="#dot"/></svg></div>
        <div class="dcol"><svg class="i"><use href="#dcube"/></svg></div>
        <div class="dcol"><svg class="i"><use href="#tri"/></svg></div>
        <div class="dcol"></div>
      </div>
      <div class="grip low"></div>
      <div class="filter wide"><svg class="i"><use href="#funnel"/></svg><svg class="i s"><use href="#caret"/></svg></div>
      <div class="lower">
        <ul class="tree study">
          <li class="in"><svg class="i"><use href="#exp"/></svg><svg class="i"><use href="#gcube"/></svg><svg class="i"><use href="#mesh"/></svg>SolidBody 1(Fillet1)</li>
          <li class="in"><svg class="i"><use href="#exp"/></svg><svg class="i"><use href="#gcube"/></svg><svg class="i"><use href="#mesh"/></svg>SolidBody 2(Cut-Extrude1)</li>
          <li class="in"><svg class="i"><use href="#exp"/></svg><svg class="i"><use href="#gcube"/></svg><svg class="i"><use href="#mesh"/></svg>SolidBody 3(Chamfer1)</li>
          <li><svg class="i"><use href="#exd"/></svg><svg class="i"><use href="#oky"/></svg>CATI-Tank-1</li>
          <li class="in"><svg class="i"><use href="#exp"/></svg><svg class="i"><use href="#okg"/></svg><svg class="i"><use href="#mesh"/></svg>SolidBody 1(BottomRail) (-ABS PC-)</li>
          <li class="in"><svg class="i"><use href="#exp"/></svg><svg class="i"><use href="#okg"/></svg><svg class="i"><use href="#mesh"/></svg>SolidBody 3(TopRail) (-ABS PC-)</li>
          <li class="in"><svg class="i"><use href="#exp"/></svg><svg class="i"><use href="#okb"/></svg><svg class="i"><use href="#mesh"/></svg>SolidBody 6(Split1[2]) (-Tempered glass (1)-)</li>
          <li class="in"><svg class="i"><use href="#exp"/></svg><svg class="i"><use href="#okb"/></svg><svg class="i"><use href="#mesh"/></svg>SolidBody 7(Split1[1]) (-Tempered glass-)</li>
          <li><svg class="i"><use href="#exp"/></svg><svg class="i"><use href="#gcube"/></svg><svg class="i"><use href="#mesh"/></svg>Water^CATI-Aquarium-1</li>
          <li><svg class="i"><use href="#conn"/></svg>Connections</li>
          <li><svg class="i"><use href="#exp"/></svg><svg class="i"><use href="#contact"/></svg>Component Contacts</li>
          <li><svg class="i"><use href="#part"/></svg>Fixtures</li>
          <li class="in"><svg class="i"><use href="#face"/></svg>On Flat Faces-1 (:0 mm:)</li>
          <li class="in"><svg class="i"><use href="#fixed"/></svg>Fixed-1</li>
          <li class="in"><svg class="i"><use href="#refg"/></svg>Reference Geometry-1 (:0 mm:)</li>
          <li><svg class="i"><use href="#load"/></svg>External Loads</li>
          <li class="in"><svg class="i"><use href="#press"/></svg>Pressure-1 (:9,812 N/m^2:)</li>
          <li><svg class="i"><use href="#okg"/></svg>Mesh</li>
          <li><svg class="i"><use href="#exp"/></svg><svg class="i"><use href="#meshc"/></svg>Mesh Controls</li>
          <li><svg class="i"><use href="#ropt"/></svg>Result Options</li>
          <li class="strong"><svg class="i"><use href="#rfold"/></svg>Results</li>
          <li class="in"><svg class="i"><use href="#sim"/></svg>Displacement1 (-Res disp-)</li>
          <li class="in"><span class="sel"><svg class="i"><use href="#sim"/></svg>Stress2 (-1st principal-)</span></li>
        </ul>
        <div class="vs"><svg class="i s"><use href="#up"/></svg><i class="long"></i><svg class="i s"><use href="#down"/></svg></div>
      </div>
      <div class="knob"></div>
    </aside>

    <section class="canvas">
      <p class="info">Model name: CATI-Aquarium<br>Study name: With split(-29Gal with split-)<br>Plot type: Static nodal stress Stress2<br>Deformation scale: 19.0557</p>
      <svg class="mouse" viewBox="0 0 12 12"><path d="M3 1v9l2-2 1.500 3.500 1.300-.6L6.500 7.500H9.500z" fill="#fff" stroke="#666" stroke-width=".9"/></svg>
      <svg class="tank" viewBox="0 0 1200 1050" role="img" aria-label="Stress plot of the tank">
        <defs>
          <clipPath id="cf"><path d="M66 265Q300 390 500 415T975 475L970 970 95 715z"/></clipPath>
          <clipPath id="cb"><path d="M256 66Q500 74 600 92 800 117 960 188L1148 266Q1045 345 988 465 800 460 640 440 430 405 270 340z"/></clipPath>
          <clipPath id="cl"><path d="M256 64Q185 175 62 236L150 290 271 340z"/></clipPath>
          <clipPath id="cr"><path d="M973 480L1000 430 1144 290 1132 765 1140 770 975 972 970 965z"/></clipPath>
          <filter id="b10" x="-50%" y="-50%" width="200%" height="200%"><feGaussianBlur stdDeviation="10"/></filter>
          <filter id="b18" x="-50%" y="-50%" width="200%" height="200%"><feGaussianBlur stdDeviation="20"/></filter>
          <filter id="b30" x="-50%" y="-50%" width="200%" height="200%"><feGaussianBlur stdDeviation="34"/></filter>
          <linearGradient id="gb" gradientUnits="userSpaceOnUse" x1="258" y1="200" x2="1140" y2="270"><stop offset="0" stop-color="#5fd6c0"/><stop offset=".035" stop-color="#5cd062"/><stop offset=".07" stop-color="#57cfae"/><stop offset=".11" stop-color="#3f9de0"/><stop offset=".2" stop-color="#0a18dc"/><stop offset=".35" stop-color="#0000dc"/><stop offset=".7" stop-color="#0000b4"/><stop offset=".83" stop-color="#00009c"/><stop offset=".9" stop-color="#1c4fa4"/><stop offset=".96" stop-color="#3fa0a0"/><stop offset="1" stop-color="#55c060"/></linearGradient>
          <linearGradient id="gf2" gradientUnits="userSpaceOnUse" x1="66" y1="0" x2="975" y2="0"><stop offset="0" stop-color="#3fa0a8"/><stop offset=".1" stop-color="#3a90b0"/><stop offset=".2" stop-color="#2468b8"/><stop offset=".8" stop-color="#2468b8"/><stop offset=".9" stop-color="#3f9cb4"/><stop offset="1" stop-color="#52c2cc"/></linearGradient>
        </defs>
        <g clip-path="url(#cl)"><path d="M40 50h240v300H40z" fill="#60dfd4"/><ellipse cx="200" cy="265" rx="34" ry="70" fill="#2c88e0" filter="url(#b18)"/><path d="M225 60h35l10 270h-25z" fill="#66e05c" filter="url(#b10)"/><path d="M60 245l70-50-10 50 30 30z" fill="#6bea50" filter="url(#b10)"/></g>
        <g clip-path="url(#cb)"><path d="M240 50h920v420H240z" fill="url(#gb)"/><ellipse cx="650" cy="390" rx="230" ry="60" fill="#0000e6" filter="url(#b30)"/><path d="M400 60l560 110 80 60-600-90z" fill="#0000b8" opacity=".4" filter="url(#b18)"/></g>
        <path d="M258 68l12 257" stroke="#134" stroke-width="3"/>
        <g clip-path="url(#cf)">
          <path d="M50 250h940v740H50z" fill="url(#gf2)"/>
          <path d="M90 600L980 830V990H90z" fill="#4096a8" filter="url(#b30)"/>
          <ellipse cx="104" cy="460" rx="16" ry="180" fill="#4aa64c" filter="url(#b10)"/>
          <ellipse cx="942" cy="680" rx="20" ry="190" fill="#4db24e" filter="url(#b10)"/>
          <path d="M160 250L860 440V640Q850 790 720 795 480 760 330 690 170 600 160 250z" fill="#0a2ab8" filter="url(#b30)"/>
          <path d="M200 290L810 450V590Q815 735 700 755 530 735 370 650 215 550 200 290z" fill="#000098" filter="url(#b18)"/>
          <path d="M620 450L780 490 780 660 700 720z" fill="#0000b0" filter="url(#b30)"/>
          <path d="M190 718Q310 695 560 765T880 925L870 990 190 790z" fill="#48a030" filter="url(#b10)"/>
          <path d="M285 758Q450 745 600 815T800 900L770 930 290 800z" fill="#b4c024" filter="url(#b10)"/>
          <path d="M345 768Q480 765 600 820T745 890L720 910 340 795z" fill="#d98a18" filter="url(#b10)"/>
          <path d="M385 778Q490 778 585 824T685 872L665 895 380 812z" fill="#b01c10" filter="url(#b10)"/>
          <ellipse cx="100" cy="700" rx="30" ry="20" fill="#1848a8" filter="url(#b18)"/>
          <ellipse cx="955" cy="940" rx="45" ry="25" fill="#2858a8" filter="url(#b18)"/>
        </g>
        <g clip-path="url(#cr)">
          <path d="M960 280h200v700H960z" fill="#5fdcd8"/>
          <ellipse cx="985" cy="640" rx="14" ry="210" fill="#62e060" filter="url(#b10)"/>
          <path d="M1100 300h50v350h-30z" fill="#68e850" filter="url(#b10)"/>
          <path d="M1055 440Q1085 560 1130 690L1150 980H975Q1010 700 1055 440z" fill="#2868e4" filter="url(#b18)"/>
          <path d="M1054 570L1105 700 1150 790 975 990Q1015 760 1054 570z" fill="#0004e4" filter="url(#b10)"/>
        </g>
        <path d="M66 268l29 440M975 485l-5 480M1142 300l-12 450" fill="none" stroke="#0c2c48" stroke-width="3"/>
        <path d="M975 962L1130 770V755H1145V784L975 992z" fill="#0000cc" stroke="#000080" stroke-width="3"/>
        <path d="M88 706L975 962V992L82 740z" fill="#0000a4" stroke="#000070" stroke-width="3"/>
        <path d="M252 56Q500 66 600 82 800 108 960 178L1162 262 1140 272 960 197Q800 127 600 98 500 80 258 72 190 175 78 237L47 232Q160 170 252 56z" fill="#0000a8" stroke="#00006c" stroke-width="3"/>
        <path d="M47 232L75 236Q270 350 500 398 740 450 988 452 1040 330 1140 270L1162 262V292Q1050 370 988 488 720 480 500 432 250 370 48 260z" fill="#0818b4" stroke="#000068" stroke-width="3"/>
        <path d="M988 453Q1050 340 1162 264V292Q1050 370 988 488z" fill="#0000dc"/>
        <path d="M50 246Q300 385 500 408T985 462" fill="none" stroke="#001050" stroke-width="2"/>
        <g fill="#b02050"><circle cx="357" cy="289" r="4"/><circle cx="437" cy="245" r="3"/><circle cx="504" cy="303" r="4"/><circle cx="603" cy="285" r="3"/><circle cx="684" cy="346" r="4"/><circle cx="770" cy="325" r="3"/><circle cx="870" cy="391" r="4"/><circle cx="943" cy="365" r="3"/><circle cx="508" cy="398" r="3"/><circle cx="1052" cy="543" r="4"/><circle cx="1017" cy="583" r="3"/><circle cx="1051" cy="644" r="3"/><circle cx="1015" cy="685" r="3"/><circle cx="1086" cy="603" r="3"/></g>
        <g fill="#244a38"><circle cx="257" cy="256" r="4"/><circle cx="327" cy="260" r="4"/><circle cx="243" cy="295" r="4"/><circle cx="223" cy="292" r="3"/><circle cx="277" cy="208" r="3"/><circle cx="1121" cy="464" r="3"/><circle cx="1087" cy="503" r="3"/><circle cx="1105" cy="506" r="3"/><circle cx="1120" cy="565" r="3"/><circle cx="984" cy="625" r="3"/><circle cx="997" cy="631" r="3"/><circle cx="982" cy="728" r="3"/></g>
        <path d="M45 728l25 6 12-18 6 28-16 16-8-14-20-4zM958 996h18v12l-10 6-8-6z" fill="#45ee38"/>
      </svg>
      <svg class="triad" viewBox="0 0 40 40"><path d="M15 27V9" stroke="#20a820" stroke-width="1.800"/><path d="M12 11l3-6 3 6z" fill="#20c020"/><path d="M15 27l15 4" stroke="#c01818" stroke-width="1.800"/><path d="M28 28l6 4-7 2z" fill="#d01818"/><path d="M15 27l-8 6" stroke="#1830c0" stroke-width="1.800"/><path d="M9 30l-5 6 7-1z" fill="#1830d0"/><path d="M13 1l2 2 2-2M35 29l3 4M38 29l-3 4" stroke="#888" stroke-width=".8" fill="none"/></svg>
      <div class="legend">
        <p>P1 (N/mm^2 (MPa))</p>
        <div class="scale"><div class="bar"></div><ol><li>23.2</li><li>20.8</li><li>18.5</li><li>16.1</li><li>13.8</li><li>11.5</li><li>9.1</li><li>6.8</li><li>4.4</li><li>2.1</li><li>-0.2</li></ol></div>
      </div>
      <nav class="pane"><button class="lit" aria-label="Home"><svg class="i"><use href="#home"/></svg></button><button aria-label="Library"><svg class="i"><use href="#box3"/></svg></button><button aria-label="Explorer"><svg class="i"><use href="#fold"/></svg></button><button aria-label="View palette"><svg class="i"><use href="#view"/></svg></button><button aria-label="Appearances"><svg class="i"><use href="#ball"/></svg></button><button aria-label="Properties"><svg class="i"><use href="#list"/></svg></button></nav>
    </section>
  </div>

  <nav class="btabs">
    <div class="step"><svg class="i s"><use href="#left"/></svg><svg class="i s"><use href="#left"/></svg><svg class="i s"><use href="#right"/></svg><svg class="i s"><use href="#right"/></svg></div>
    <button>Model</button><button>Motion Study 1</button><button class="plotted"><svg class="i s"><use href="#plot"/></svg>Without split</button><button class="cur"><svg class="i s"><use href="#plot"/></svg>With split</button>
  </nav>

  <div class="fbar">
    <div class="lead"><svg class="i"><use href="#gf"/></svg><svg class="i"><use href="#gf"/></svg><svg class="i"><use href="#pf"/></svg></div>
    <button class="picked" aria-label="Select"><svg class="i"><use href="#arrow"/></svg><svg class="i s"><use href="#caret"/></svg></button>
    <svg class="i faded"><use href="#page"/></svg>
    <div class="fset">
      <svg class="i"><use href="#f1"/></svg><svg class="i"><use href="#f2"/></svg><svg class="i"><use href="#f3"/></svg><svg class="i"><use href="#f4"/></svg><svg class="i"><use href="#f5"/></svg><svg class="i"><use href="#f6"/></svg><svg class="i"><use href="#f7"/></svg><svg class="i"><use href="#f1"/></svg><svg class="i"><use href="#f8"/></svg><svg class="i"><use href="#f9"/></svg><svg class="i"><use href="#f6"/></svg><svg class="i"><use href="#f10"/></svg><svg class="i"><use href="#f11"/></svg><svg class="i"><use href="#f12"/></svg><svg class="i"><use href="#f13"/></svg><svg class="i"><use href="#f14"/></svg><svg class="i"><use href="#f15"/></svg><svg class="i"><use href="#f16"/></svg><svg class="i"><use href="#f17"/></svg><svg class="i"><use href="#f18"/></svg><svg class="i"><use href="#f15"/></svg><svg class="i"><use href="#f19"/></svg><svg class="i"><use href="#f16"/></svg><svg class="i"><use href="#f20"/></svg><svg class="i"><use href="#f21"/></svg><svg class="i"><use href="#f22"/></svg><svg class="i"><use href="#f3"/></svg><svg class="i"><use href="#f23"/></svg><svg class="i"><use href="#f24"/></svg>
    </div>
  </div>

  <div class="status"><span class="path">CATI-Tank&lt;1&gt;</span><span>Fully Defined</span><span>Editing Assembly</span><span class="cust">Custom</span><svg class="i s"><use href="#caret"/></svg><svg class="i last"><use href="#gear"/></svg></div>

  <footer class="taskbar">
    <button class="start" aria-label="Start"><svg class="i"><use href="#win"/></svg></button>
    <label class="tsearch"><svg class="i"><use href="#tmag"/></svg><input type="text" placeholder="Type here to search" aria-label="Type here to search"></label>
    <div class="apps">
      <button aria-label="Cortana"><svg class="i"><use href="#ring"/></svg></button>
      <button aria-label="Task view"><svg class="i"><use href="#tv"/></svg></button>
      <button><span class="office ol">O</span></button>
      <button aria-label="Files"><svg class="a"><use href="#folder"/></svg></button>
      <button aria-label="Acrobat"><svg class="a"><use href="#acro"/></svg></button>
      <button><span class="office wd">W</span></button>
      <button><span class="office xl">X</span></button>
      <button class="run"><span class="office pp">P</span></button>
      <button><span class="sky pale">S</span></button>
      <button><span class="sky">S<small>3</small></span></button>
      <button aria-label="Design"><svg class="a"><use href="#purple"/></svg></button>
      <button aria-label="Chrome"><svg class="a"><use href="#chrome"/></svg></button>
      <button><span class="sw">SW</span></button>
      <button><span class="sw">SW<small>2019</small></span></button>
      <button class="front"><span class="sw">SW<small>2020</small></span></button>
    </div>
    <div class="tray"><svg class="i"><use href="#tup"/></svg><svg class="i"><use href="#drop"/></svg><svg class="i blue"><use href="#cloud"/></svg><svg class="i"><use href="#outl"/></svg><svg class="i"><use href="#batt"/></svg><svg class="i"><use href="#wifi"/></svg><svg class="i"><use href="#vol"/></svg><svg class="i"><use href="#ucloud"/></svg></div>
    <time class="clock">1:12 PM<br>10/4/2019</time>
    <button class="notes" aria-label="Notifications"><svg class="a"><use href="#note"/></svg><small>27</small></button>
  </footer>
</main>
<aside class="edge"><button class="subs"><svg viewBox="0 0 18 18"><path d="M0 0h18v18H0z" fill="#c9c5c4"/><path d="M5 4l9 5-9 5z" fill="#b3201a"/></svg>Subscribe</button></aside>
</div>
</body>
</html>
```
FILE: styles.css
```css
* { box-sizing: border-box; }
body { margin: 0; background: #000; font-family: "Noto Sans", "Open Sans", sans-serif; font-size: 8px; line-height: 11px; color: #3a3a3c; }
button, input { font: inherit; color: inherit; border: 0; padding: 0; background: none; min-width: 0; }
button { white-space: nowrap; }
a { color: inherit; text-decoration: none; }
ul, ol, p { margin: 0; padding: 0; list-style: none; }
.sprite { position: absolute; width: 0; height: 0; }
.i { width: 11px; height: 11px; flex: none; }
.i.s { width: 8px; height: 8px; }
.a { width: 15px; height: 15px; flex: none; }

.screen { display: grid; grid-template-columns: 114px 1fr 115px; height: 100vh; }
.app { grid-column: 2; display: flex; flex-direction: column; min-width: 0; overflow: hidden; background: #f7f7f8; }

/* Title bar */
.titlebar { position: relative; display: flex; align-items: center; height: 14px; padding-bottom: 4px; border-bottom: 1px solid #b5b5b8; font-size: 7px; flex: none; background: #fafafb; }
.titlebar::before { content: ""; position: absolute; left: 459px; top: 0; width: 102px; height: 2px; background: #888; }
.logo { display: flex; align-items: center; gap: 3px; width: 80px; height: 14px; padding-left: 3px; border-right: 1px solid #bbb; color: #c8424a; font-size: 8px; font-style: italic; align-self: flex-start; flex: none; }
.ds { width: 16px; height: 11px; }
.menus { display: flex; gap: 9px; padding-left: 14px; }
.pinned { margin: 0 6px 0 13px; }
.quick { display: flex; align-items: center; gap: 2px; padding-left: 6px; border-left: 1px solid #aaa; }
.quick .i { margin: 0 1px; }
.quick .i.s { margin: 0 -1px 0 -2px; }
.picked { display: flex; align-items: center; justify-content: center; width: 21px; height: 14px; background: #b9b9bb; }
.doc { margin: 0 auto; }
.find { display: flex; align-items: center; height: 14px; width: 139px; padding: 0 3px; gap: 4px; border: 1px solid #8e8e96; background: #f6f6f8; align-self: flex-start; flex: none; }
.find input { flex: 1; outline: none; }
.find input::placeholder { color: #77777c; opacity: 1; }
.wctl { display: flex; align-items: center; gap: 2px; padding: 0 0 0 4px; }

/* Ribbon */
.ribbon { display: flex; height: 48px; padding: 3px 0 1px; flex: none; border-bottom: 1px solid #b5b5b8; background: #f5f5f6; font-size: 7px; }
.ribbon button { display: flow-root; flex: none; padding: 4px 0; text-align: center; }
.ribbon .i { display: block; margin: 0 auto; width: 13px; height: 13px; }
.w40 { width: 41px; }
.w52 { width: 51px; }
.w53 { width: 53px; }
.w58 { width: 57px; }
.ribbon .on { background: #acacad; outline: 1px solid #8a8a8a; outline-offset: -1px; }
.off { color: #c8c8ca; }
.ribbon button:not(.on) { align-self: flex-start; }

/* Command tabs and view toolbar */
.tabrow { display: flex; align-items: center; height: 15px; background: #fff; flex: none; }
.tabs { display: flex; align-self: stretch; }
.tabs button { padding: 0 4px; background: #d4d4d5; border: solid #a5a5a5; border-width: 0 1px 1px 0; color: #555; }
.tabs button:first-child { padding-left: 0; }
.tabs .cur { padding: 0 7px; background: #fff; border-bottom: 0; font-weight: 700; color: #333; }
.tabs button:last-child { padding: 0 5px; }
.hud { display: flex; align-items: center; gap: 3px; margin-left: auto; }
.hud .i.s { margin: 0 -1px 0 -2px; }
.dctl { display: flex; gap: 3px; margin-left: 230px; padding-right: 3px; color: #999; }

/* Panels */
.work { display: flex; flex: 1; min-height: 0; }
.side { position: relative; z-index: 1; display: flex; flex-direction: column; width: 243px; flex: none; background: #f5f5f7; border-right: 2px solid #c9c9ce; }
.grip { height: 16px; border: solid #d5d5d8; border-width: 1px 0; display: grid; place-items: center; flex: none; }
.grip::after { content: ""; width: 4px; height: 4px; border-radius: 50%; background: #b5b5b8; }
.low { height: 10px; }
.knob { position: absolute; right: -7px; top: 202px; width: 7px; height: 27px; border: 1px solid #bbb; background: #f0f0f2; }
.knob::after { content: ""; position: absolute; left: 1px; top: 11px; width: 3px; height: 3px; border-radius: 50%; background: #b5b5b8; }
.ptabs { display: flex; height: 16px; flex: none; }
.ptabs button { width: 22px; display: grid; place-items: center; background: #d3d3d5; border: 1px solid #a9a9ab; border-left: 0; }
.ptabs .first { width: 16px; background: #f5f5f7; }
.pico { display: flex; align-items: center; gap: 3px; margin-left: auto; }
.upper { display: flex; height: 79px; flex: none; }
.umain { display: flex; flex-direction: column; width: 185px; border-right: 1px solid #ccc; }
.dcol { width: 14px; display: grid; grid-template-rows: repeat(4, 13px); padding-top: 17px; border-right: 1px solid #ccc; align-items: center; justify-items: center; }
.filter { display: flex; align-items: center; height: 17px; border: 1px solid #d5d5d8; border-left: 0; flex: none; background: #f8f8f9; }
.filter .i:first-child { width: 9px; }
.ubody { display: flex; height: 50px; overflow: hidden; }
.tree { flex: 1; min-width: 0; }
.tree li { display: flex; align-items: center; height: 13px; padding-left: 6px; white-space: nowrap; }
.tree .i { margin-right: 2px; }
.tree .in { padding-left: 19px; }
.tree .dim { color: #9a9a9c; }
.vs { display: flex; flex-direction: column; align-items: center; width: 10px; padding: 2px 0; background: #f0f0f2; flex: none; }
.vs i { width: 10px; background: #c9c9cc; }
.vs .i.s { width: 10px; }
.short { height: 12px; margin: auto 0 3px; }
.long { flex: 1; margin-top: 44px; }
.hs { display: flex; align-items: center; justify-content: space-between; padding: 0 12px 0 5px; }
.hs i { width: 94px; height: 10px; background: #c9c9cc; }
.lower { display: flex; flex: 1; min-height: 0; padding-bottom: 2px; }
.study { display: grid; grid-auto-rows: 1fr; }
.study li { height: auto; }
.strong { font-weight: 700; color: #222; }
.sel { display: flex; align-items: center; align-self: stretch; margin-left: -1px; padding: 0 2px 0 0; background: #a9c4e2; border: 1px solid #6f93bd; font-weight: 700; color: #223; }

/* Graphics area */
.canvas { position: relative; flex: 1; min-width: 0; background: #fff; }
.info { padding: 9px 0 0 11px; color: #333; }
.mouse, .tank, .triad, .legend, .pane { position: absolute; }
.mouse { left: 144px; top: 166px; width: 12px; height: 12px; }
.tank { left: 193px; top: 33px; width: 400px; height: 350px; }
.triad { left: 12px; top: 381px; width: 40px; height: 40px; }
.legend { left: 650px; top: 78px; color: #333; }
.scale { display: flex; padding-top: 12px; }
.bar { width: 18px; height: 223px; margin-top: 7px; margin-right: 8px; border: solid #667; border-width: 1px 0; background: linear-gradient(#e82a20, #f07a28 10%, #fbf53c 20%, #8cf03c 35%, #52e83c 52%, #5cf08c 60%, #58f4f8 71%, #3c90f0 82%, #0808f0 97%); }
.legend ol { display: grid; grid-auto-rows: 22px; }
.legend li { position: relative; }
.legend li::before { content: ""; position: absolute; left: -8px; top: 7px; width: 3px; height: 1px; background: #444; }
.pane { right: 0; top: 17px; display: flex; flex-direction: column; border: 1px solid #aaa; border-right: 0; }
.pane button { width: 15px; height: 16px; display: grid; place-items: center; background: #c9c9cb; border-bottom: 1px solid #a5a5a8; }
.pane .lit { background: #f8f8f8; }

/* Document tabs, filter bar, status */
.btabs { display: flex; height: 12px; border-top: 1px solid #aaa; background: #f6f6f7; flex: none; }
.step { display: flex; align-items: center; gap: 3px; width: 40px; background: #a9a5b5; opacity: .8; padding-left: 1px; }
.btabs button { display: flex; align-items: center; justify-content: center; gap: 2px; padding: 0 9px; background: #d3d3d5; border-right: 1px solid #a5a5a8; }
.btabs .plotted { padding-left: 5px; }
.btabs .cur { background: #fff; font-weight: 700; padding: 0 9px 0 4px; color: #222; }
.fbar { display: flex; align-items: center; height: 19px; border-bottom: 1px solid #b5b5b8; flex: none; background: #fafafb; }
.lead { display: flex; gap: 4px; padding: 0 1px 0 4px; }
.fbar .faded { opacity: .3; margin: 0 4px; }
.fset { display: flex; justify-content: space-between; width: 440px; padding: 0 4px 0 7px; border: solid #aaa; border-width: 0 1px; }
.status { display: flex; align-items: center; height: 12px; gap: 10px; flex: none; }
.path { margin: 0 auto 0 -5px; }
.cust { margin-left: 56px; }
.last { margin-right: -3px; }

/* Task bar */
.taskbar { display: flex; height: 27px; background: #373d45; color: #eee; flex: none; }
.start { width: 27px; padding-right: 6px; display: grid; place-items: center; flex: none; }
.tsearch { display: flex; align-items: center; gap: 8px; width: 237px; padding-left: 8px; background: #f1f1f2; color: #444; font-size: 10px; flex: none; }
.tsearch input { flex: 1; height: 24px; outline: none; }
.tsearch input::placeholder { color: #555; opacity: 1; }
.apps { display: flex; width: 514px; }
.apps button { display: grid; place-items: center; flex: 1; border-bottom: 2px solid transparent; }
.apps .run { border-color: #5f7f9c; }
.apps .front { background: #5b6169; border-color: #86a8c8; }
.office { display: block; width: 15px; height: 14px; border-radius: 2px; color: #fff; font-weight: 700; line-height: 14px; text-align: left; padding-left: 1px; }
.ol { background: linear-gradient(90deg, #1562b0 55%, #3aa0e0 55%); }
.wd { background: linear-gradient(90deg, #1d4fa5 55%, #4488dc 55%); }
.xl { background: linear-gradient(90deg, #14703f 55%, #2fa36a 55%); }
.pp { background: linear-gradient(90deg, #b93a20 50%, #e0694a 50%); border-radius: 8px; padding-left: 3px; }
.sky { position: relative; width: 14px; height: 14px; border-radius: 7px; background: #1d86cc; color: #fff; font-size: 10px; font-weight: 700; line-height: 14px; }
.pale { background: #e6f5fb; color: #1aa0dc; border: 1px solid #4cc0ea; line-height: 12px; }
.sky small { position: absolute; left: 9px; top: 6px; width: 10px; height: 10px; border-radius: 5px; background: #3a4148; font-size: 8px; line-height: 10px; }
.sw { position: relative; width: 16px; height: 15px; background: linear-gradient(#c8282c, #8c1014); border-radius: 4px 4px 3px 3px; color: #fff; font-size: 8px; font-weight: 700; line-height: 13px; }
.sw small { position: absolute; right: 0; bottom: -2px; font-size: 5px; line-height: 6px; }
.tray { display: flex; align-items: center; gap: 5px; margin-left: auto; padding-right: 4px; }
.tray .i { width: 12px; height: 12px; }
.blue { color: #2a8ee0; }
.clock { width: 40px; text-align: center; line-height: 12px; padding-top: 2px; white-space: nowrap; flex: none; }
.notes { position: relative; width: 37px; display: grid; place-items: center; flex: none; }
.notes .a { width: 12px; height: 12px; }
.notes small { position: absolute; left: 17px; top: 12px; width: 11px; height: 11px; border-radius: 6px; background: #3a4048; font-size: 7px; }

/* Overlay button at the right edge */
.edge { grid-column: 3; display: flex; align-items: flex-end; justify-content: flex-end; padding: 0 21px 21px 0; }
.subs { display: flex; flex-direction: column; align-items: center; gap: 2px; width: 39px; height: 39px; padding-top: 5px; border-radius: 2px; background: #b3241c; color: #e0d0d0; font-size: 7px; font-weight: 700; }
.subs svg { width: 18px; height: 18px; }
```
